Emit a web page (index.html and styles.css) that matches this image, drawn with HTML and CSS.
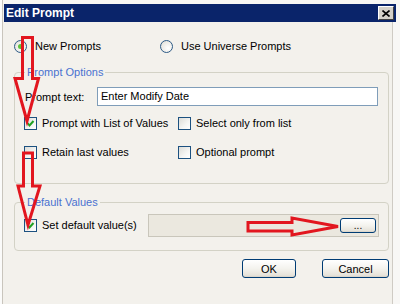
FILE: index.html
```html
<!DOCTYPE html>
<html>
<head>
<meta charset="utf-8">
<link rel="stylesheet" href="styles.css">
</head>
<body>
<div class="window">
  <div class="titlebar">
    <span class="title">Edit Prompt</span>
    <span class="close"><svg width="8" height="7" viewBox="0 0 8 7"><path d="M0.5 0.5 L7.5 6.5 M7.5 0.5 L0.5 6.5" stroke="#000" stroke-width="1.6"/></svg></span>
  </div>
  <div class="content">
    <div class="radios">
      <label class="radio r1"><span class="rb checked"></span>New Prompts</label>
      <label class="radio"><span class="rb"></span>Use Universe Prompts</label>
    </div>

    <fieldset class="group g1">
      <legend>Prompt Options</legend>
      <div class="textrow">
        <span>Prompt text:</span>
        <div class="input">Enter Modify Date</div>
      </div>
      <div class="checks">
        <label class="cbi"><span class="cb"><svg width="11" height="11" viewBox="0 0 11 11"><path d="M2.5 5 L4.5 7.5 L8.5 3" fill="none" stroke="#21a121" stroke-width="2"/></svg></span>Prompt with List of Values</label>
        <label class="cbi"><span class="cb"></span>Select only from list</label>
        <label class="cbi"><span class="cb"></span>Retain last values</label>
        <label class="cbi"><span class="cb"></span>Optional prompt</label>
      </div>
    </fieldset>

    <fieldset class="group g2">
      <legend>Default Values</legend>
      <div class="defrow">
        <label class="cbi"><span class="cb"><svg width="11" height="11" viewBox="0 0 11 11"><path d="M2.5 5 L4.5 7.5 L8.5 3" fill="none" stroke="#21a121" stroke-width="2"/></svg></span>Set default value(s)</label>
        <div class="field"><span class="btn dots">...</span></div>
      </div>
    </fieldset>

    <div class="buttons">
      <span class="btn ok">OK</span>
      <span class="btn cancel">Cancel</span>
    </div>
  </div>

  <svg class="arrows" width="400" height="304" viewBox="0 0 400 304">
    <polygon points="22.5,37.5 32.5,37.5 32.5,78.5 38.5,78.5 27,121 15,78.5 22.5,78.5" fill="none" stroke="#e2161f" stroke-width="3" stroke-linejoin="miter"/>
    <polygon points="23.5,153 32.5,153 32.5,186 40,186 28,225 18,186 23.5,186" fill="none" stroke="#e2161f" stroke-width="3" stroke-linejoin="miter"/>
    <polygon points="248,222.5 292,222.5 292,218 338,226.5 292,235 292,231 248,231" fill="none" stroke="#e2161f" stroke-width="3" stroke-linejoin="miter"/>
  </svg>
</div>
</body>
</html>
```
FILE: styles.css
```css
* { box-sizing: border-box; }
html, body { margin: 0; padding: 0; }
body {
  width: 400px;
  height: 304px;
  overflow: hidden;
  background: #f3f1ec;
  font-family: "Liberation Sans", Arial, sans-serif;
  font-size: 11px;
  color: #000;
}
.window {
  position: relative;
  width: 400px;
  height: 304px;
  padding: 4px 4px 0 4px;
  background: #f3f1ec;
  box-shadow: inset 2px 0 0 #fbfbfa, inset 3px 0 0 #c9c5bd, inset 0 4px 0 #f8f7f4, inset -7px 0 0 #f8f7f5, inset -8px 0 0 #cfcbc4;
}
.titlebar {
  height: 18px;
  background: #0a246a;
  display: flex;
  align-items: center;
  justify-content: space-between;
  padding: 0 2px 0 2px;
}
.title {
  color: #fff;
  font-weight: bold;
  font-size: 12px;
}
.close {
  width: 16px;
  height: 14px;
  background: #d4d0c8;
  border: 1px solid;
  border-color: #fff #404040 #404040 #fff;
  display: flex;
  align-items: center;
  justify-content: center;
}
.content {
  padding: 18px 7px 0 10px;
}
.radios {
  display: flex;
  height: 13px;
}
.radio {
  display: flex;
  align-items: center;
  gap: 8px;
  line-height: 13px;
}
.r1 { width: 146px; }
.rb {
  width: 13px;
  height: 13px;
  border-radius: 50%;
  border: 1px solid #2c5a86;
  background: radial-gradient(circle at 65% 65%, #ffffff 0%, #ecebe6 60%, #d6d4cc 100%);
  position: relative;
  flex: none;
}
.rb.checked::after {
  content: "";
  position: absolute;
  left: 3px;
  top: 3px;
  width: 5px;
  height: 5px;
  border-radius: 50%;
  background: #5cc23a;
}
.group {
  margin: 0;
  border: 1px solid #d3d2c6;
  border-radius: 4px;
  padding: 8px 10px 24px 10px;
  min-width: 0;
}
.group legend {
  padding: 0 2px;
  color: #4a72d0;
  line-height: 13px;
  height: 13px;
}
.g1 { margin-top: 13px; }
.textrow {
  display: grid;
  grid-template-columns: 72px 1fr;
  align-items: center;
}
.input {
  height: 19px;
  border: 1px solid #7f9db9;
  background: #fff;
  padding: 0 3px;
  line-height: 17px;
}
.checks {
  display: grid;
  grid-template-columns: 154px 1fr;
  row-gap: 16px;
  margin-top: 11px;
  margin-left: -1px;
}
.cbi {
  display: flex;
  align-items: center;
  gap: 5px;
  height: 13px;
  line-height: 13px;
}
.cb {
  width: 13px;
  height: 13px;
  border: 1px solid #1c5180;
  background: linear-gradient(135deg, #dcdcd7 0%, #f5f5f3 60%, #ffffff 100%);
  flex: none;
  display: flex;
  align-items: center;
  justify-content: center;
}
.g2 {
  margin-top: 12px;
  padding: 5px 9px 13px 10px;
}
.defrow {
  display: grid;
  grid-template-columns: 124px 1fr;
  align-items: center;
  margin-left: -1px;
}
.field {
  height: 23px;
  background: #ebe8df;
  border: 1px solid #c9c6bb;
  display: flex;
  align-items: center;
  justify-content: flex-end;
  padding-right: 2px;
}
.btn {
  display: flex;
  align-items: center;
  justify-content: center;
  border: 1px solid #003c74;
  border-radius: 3px;
  background: linear-gradient(#ffffff 0%, #f4f3ee 50%, #e6e3da 90%, #d6d0c5 100%);
}
.dots {
  width: 36px;
  height: 15px;
  font-size: 10px;
  line-height: 10px;
}
.buttons {
  display: flex;
  justify-content: flex-end;
  gap: 26px;
  margin-top: 8px;
}
.ok { width: 54px; height: 19px; }
.cancel { width: 67px; height: 19px; }
.arrows {
  position: absolute;
  left: 0;
  top: 0;
  pointer-events: none;
}
```
